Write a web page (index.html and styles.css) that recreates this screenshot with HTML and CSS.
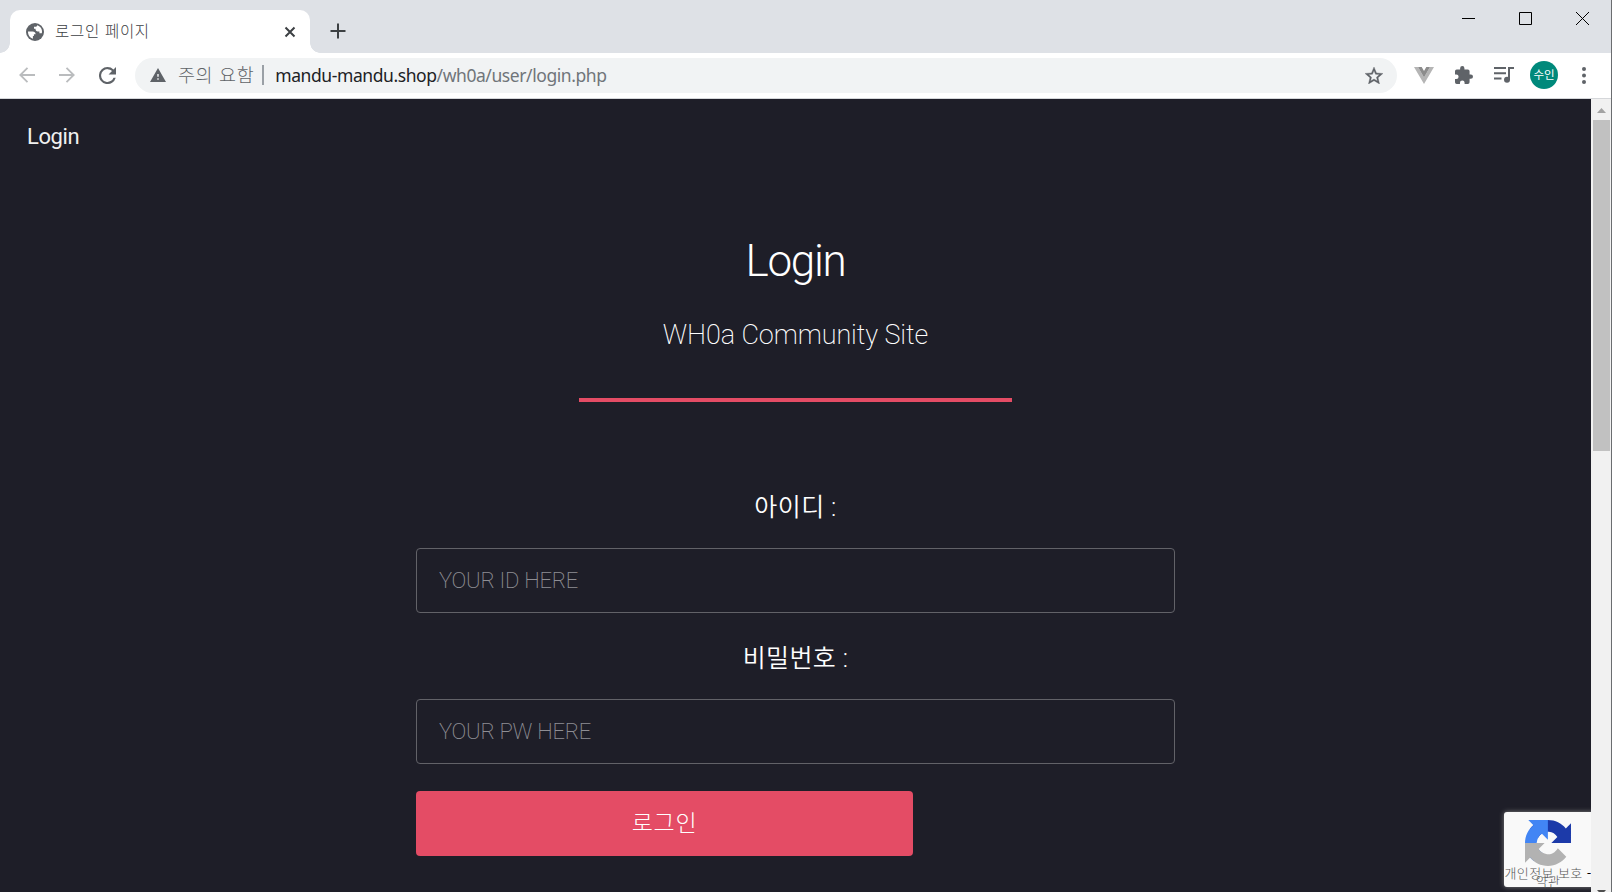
FILE: index.html
```html
<!DOCTYPE html>
<html lang="ko">
<head>
  <meta charset="UTF-8">
  <title>로그인 페이지</title>
  <link rel="stylesheet" href="styles.css">
</head>
<body>

<div class="window">
  <div class="tabstrip">
    <div class="tab">
      <svg class="globe" viewBox="0 0 18 18"><circle cx="9" cy="9" r="9" fill="#5f6368"/><path d="M2 8.500h4.600c1.900 0 3 .9 3 2.800H7.900v1.700h-1v2.700C4 14.900 2 12 2 9zM11.200 2.200c-.2 1-.9 1.500-2 1.500H8v2.100h1.500c0 2 .8 2.700 2.300 2.700h1.600v1.800h2.400C16.900 6.600 14.600 3.200 11.200 2.200z" fill="#fff"/></svg>
      <span class="tab-title">로그인 페이지</span>
      <svg class="tab-close" viewBox="0 0 12 12"><path d="M1.500 1.500l9 9M10.500 1.500l-9 9" stroke="#3c4043" stroke-width="2"/></svg>
    </div>
    <svg class="new-tab" viewBox="0 0 16 16"><path d="M8 .5v15M.5 8h15" stroke="#3c4043" stroke-width="2"/></svg>
    <div class="controls">
      <svg viewBox="0 0 13 13"><path d="M0 6.500h13" stroke="#000"/></svg>
      <svg viewBox="0 0 13 13"><path d="M.5.5h12v12H.5z" fill="none" stroke="#000"/></svg>
      <svg viewBox="0 0 13 13"><path d="M0 0l13 13M13 0L0 13" stroke="#000"/></svg>
    </div>
  </div>

  <div class="toolbar">
    <svg class="nav-icon off" viewBox="0 0 16 16"><path d="M16 8H1.500M8.500 .8L1.300 8l7.200 7.200" fill="none" stroke="currentColor" stroke-width="1.800"/></svg>
    <svg class="nav-icon off" viewBox="0 0 16 16"><path d="M0 8h14.500M7.500 .8L14.700 8l-7.200 7.200" fill="none" stroke="currentColor" stroke-width="1.800"/></svg>
    <svg class="nav-icon reload" viewBox="4 4 16 16"><path d="M17.650 6.350A7.960 7.960 0 0 0 12 4a8 8 0 1 0 7.730 10h-2.080A6 6 0 1 1 12 6c1.660 0 3.140.69 4.220 1.780L13 11h7V4z" fill="currentColor"/></svg>
    <div class="omnibox">
      <svg class="warn" viewBox="1 2 22 19"><path d="M1 21h22L12 2zm12-3h-2v-2h2zm0-4h-2v-4h2z" fill="#5f6368"/></svg>
      <span class="insecure">주의 요함</span>
      <span class="divider"></span>
      <span class="url">mandu-mandu.shop<i>/wh0a/user/login.php</i></span>
      <svg class="star" viewBox="2 2 20 19"><path d="M22 9.240l-7.190-.62L12 2 9.190 8.630 2 9.240l5.460 4.730L5.820 21 12 17.270 18.180 21l-1.630-7.030zM12 15.400l-3.760 2.270 1-4.280-3.320-2.880 4.380-.38L12 6.100l1.710 4.040 4.380.38-3.320 2.880 1 4.280z" fill="#5f6368" stroke="#5f6368" stroke-width=".4"/></svg>
    </div>
    <svg class="vue" viewBox="0 0 20 17"><path d="M0 0h4l6 10.400L16 0h4L10 17z" fill="#b5b5b5"/><path d="M4 0h3.700L10 4l2.300-4H16l-6 10.400z" fill="#8c8c8c"/></svg>
    <svg class="puzzle" viewBox="2 1 21 21"><path d="M20.500 11H19V7a2 2 0 0 0-2-2h-4V3.500a2.500 2.500 0 0 0-5 0V5H4a2 2 0 0 0-2 2v3.800h1.500a2.700 2.700 0 0 1 0 5.400H2V20a2 2 0 0 0 2 2h3.800v-1.500a2.700 2.700 0 0 1 5.400 0V22H17a2 2 0 0 0 2-2v-4h1.500a2.500 2.500 0 0 0 0-5z" fill="#5f6368"/></svg>
    <svg class="music" viewBox="0 0 20 16"><path d="M0 1h12M0 6.300h12M0 11.600h7.500M15 13V1h5" fill="none" stroke="#5f6368" stroke-width="2"/><circle cx="13" cy="12.800" r="3" fill="#5f6368"/></svg>
    <span class="avatar">수인</span>
    <svg class="dots" viewBox="0 0 4 17"><g fill="#5f6368"><circle cx="2" cy="2" r="2"/><circle cx="2" cy="8.500" r="2"/><circle cx="2" cy="15" r="2"/></g></svg>
  </div>

  <div class="viewport">
    <div class="page">
      <nav><a>Login</a></nav>
      <header>
        <h1>Login</h1>
        <p>WH0a Community Site</p>
      </header>
      <form>
        <label for="id">아이디 :</label>
        <input id="id" type="text" placeholder="YOUR ID HERE">
        <label for="pw">비밀번호 :</label>
        <input id="pw" type="password" placeholder="YOUR PW HERE">
        <button type="button">로그인</button>
      </form>

      <div class="captcha">
        <svg viewBox="0 0 64 64"><path d="M64 31.955l-.033-1.370V4.687l-7.160 7.160C50.948 4.674 42.033.093 32.050.093c-10.400 0-19.622 4.960-25.458 12.640l11.736 11.860a15.550 15.550 0 0 1 4.754-5.334c2.050-1.600 4.952-2.906 8.968-2.906.485 0 .86.057 1.135.163 4.976.393 9.288 3.140 11.828 7.124l-8.307 8.307L64 31.953" fill="#1c3aa9"/><path d="M31.862.094l-1.370.033H4.594l7.160 7.160C4.580 13.147 0 22.060 0 32.046c0 10.400 4.960 19.622 12.640 25.458L24.500 45.768a15.550 15.550 0 0 1-5.334-4.754c-1.600-2.050-2.906-4.952-2.906-8.968 0-.485.057-.86.163-1.135.393-4.976 3.140-9.288 7.124-11.828l8.307 8.307L31.860.095" fill="#4285f4"/><path d="M.001 32.045l.033 1.370v25.898l7.160-7.160c5.860 7.173 14.774 11.754 24.760 11.754 10.400 0 19.622-4.960 25.458-12.640l-11.736-11.860a15.550 15.550 0 0 1-4.754 5.334c-2.050 1.600-4.952 2.906-8.968 2.906-.485 0-.86-.057-1.135-.163-4.976-.393-9.288-3.140-11.828-7.124l8.307-8.307c-10.522.04-22.400.066-27.295-.005" fill="#b2b2b2"/></svg>
        <div class="terms">개인정보 보호 <b>-</b><br><span>약관</span></div>
      </div>
    </div>
    <div class="scrollbar">
      <svg viewBox="0 0 9 5"><path d="M0 5L4.500 0 9 5z" fill="#a3a3a3"/></svg>
      <div class="thumb"></div>
      <svg class="down" viewBox="0 0 9 5"><path d="M0 0h9L4.500 5z" fill="#505050"/></svg>
    </div>
  </div>
</div>

</body>
</html>
```
FILE: styles.css
```css
* { box-sizing: border-box; }
body { margin: 0; overflow: hidden; font-family: Roboto, "Noto Sans CJK KR", sans-serif; }
svg { display: block; flex: none; }

.window {
  width: 1612px;
  height: 892px;
  display: flex;
  flex-direction: column;
  border-right: 1px solid #6b6d70;
}

/* browser chrome */
.tabstrip {
  height: 53px;
  display: flex;
  background: #dee1e6;
  padding: 10px 0 0 10px;
}
.tab {
  position: relative;
  width: 300px;
  height: 43px;
  display: flex;
  align-items: center;
  padding: 0 14px 0 16px;
  background: #fff;
  border-radius: 10px 10px 0 0;
}
.tab:before, .tab:after {
  content: "";
  position: absolute;
  bottom: 0;
  width: 10px;
  height: 10px;
}
.tab:before { left: -10px; background: radial-gradient(circle at 0 0, #dee1e6 9.5px, #fff 10px); }
.tab:after { right: -10px; background: radial-gradient(circle at 100% 0, #dee1e6 9.5px, #fff 10px); }
.globe { width: 18px; height: 18px; }
.tab-title {
  flex: 1;
  margin-left: 11px;
  padding-bottom: 3px;
  font: 300 15.5px/20px "Noto Sans CJK KR", sans-serif;
  letter-spacing: 0.7px;
  color: #3c4043;
}
.tab-close { width: 12px; height: 12px; }
.new-tab { width: 16px; height: 16px; margin: 13px 0 0 20px; }
.controls { display: flex; gap: 44px; margin: 2px 22px 0 auto; }
.controls svg { width: 13px; height: 13px; }

.toolbar {
  height: 46px;
  display: flex;
  align-items: center;
  padding: 0 25px 1px 19px;
  border-bottom: 1px solid #d5d7da;
  background: #fff;
}
.nav-icon { width: 16px; height: 16px; margin-right: 24px; color: #5f6368; }
.off { color: #babcbe; }
.reload { width: 17px; height: 17px; margin-right: 19px; }
.omnibox {
  width: 1262px;
  height: 35px;
  display: flex;
  align-items: center;
  padding: 0 14px 0 15px;
  border-radius: 18px;
  background: #f1f3f4;
}
.warn { width: 16px; height: 14px; }
.insecure {
  margin-left: 12px;
  padding-bottom: 2px;
  font: 300 18.5px/24px "Noto Sans CJK KR", sans-serif;
  letter-spacing: 0.6px;
  color: #5f6368;
}
.divider { width: 2px; height: 20px; margin: 0 11px 0 8px; background: #9aa0a6; }
.url {
  flex: 1;
  font: 17.5px/24px "Noto Sans", sans-serif;
  letter-spacing: -0.42px;
  color: #202124;
}
.url i { font-style: normal; color: #70757a; }
.star { width: 18px; height: 17px; }
.vue { width: 20px; height: 17px; margin-left: 17px; }
.puzzle { width: 18px; height: 18px; margin-left: 21px; }
.music { width: 20px; height: 16px; margin-left: 21px; }
.avatar {
  width: 28px;
  height: 28px;
  margin-left: 16px;
  border-radius: 50%;
  background: #00897b;
  color: #fff;
  font: 11.5px/27px "Noto Sans CJK KR", sans-serif;
  text-align: center;
}
.dots { width: 4px; height: 17px; margin-left: auto; }

/* page */
.viewport { flex: 1; display: flex; min-height: 0; }
.page {
  position: relative;
  flex: 1;
  overflow: hidden;
  background: #1e1e28;
  color: #fff;
}
nav {
  padding: 24px 27px 0;
  font-size: 22px;
  line-height: 28px;
  letter-spacing: -0.4px;
  color: #f0f0f0;
}
header {
  width: 433px;
  height: 187px;
  margin: 64px auto 0;
  padding-top: 18px;
  border-bottom: 4px solid #e44c65;
  text-align: center;
}
h1 {
  margin: 0;
  font-weight: 300;
  font-size: 44px;
  line-height: 56px;
  letter-spacing: -0.03em;
}
p { margin: 28px 0 0; font-weight: 200; font-size: 27px; line-height: 36px; letter-spacing: -0.1px; }
form { width: 759px; margin: 0 auto; padding-top: 72px; }
label {
  display: block;
  height: 74px;
  padding-top: 16px;
  font-size: 25px;
  line-height: 36px;
  font-weight: 350;
  letter-spacing: 0.4px;
  text-align: center;
}
input {
  display: block;
  width: 100%;
  height: 65px;
  margin-bottom: 12px;
  padding: 0 22px;
  border: 1px solid #626268;
  border-radius: 4px;
  background: none;
  font: 200 22px Roboto, sans-serif;
  letter-spacing: -0.25px;
}
input::placeholder { color: #8e8e94; opacity: 1; }
button {
  display: block;
  width: 497px;
  height: 65px;
  margin-top: 27px;
  padding: 0 0 6px;
  border: 0;
  border-radius: 4px;
  background: #e44c65;
  color: #fff;
  font: 300 23px "Noto Sans CJK KR", sans-serif;
  letter-spacing: 0.7px;
}

.captcha {
  position: absolute;
  left: 1504px;
  top: 713px;
  width: 256px;
  height: 75px;
  padding-top: 8px;
  border-radius: 3px;
  background: #f9f9f9;
  box-shadow: 0 0 5px #808080;
}
.captcha svg { width: 46px; height: 46px; margin-left: 21px; }
.terms {
  width: 88px;
  margin-top: 3px;
  font: 300 13px/8px "Noto Sans CJK KR", sans-serif;
  letter-spacing: 0.4px;
  text-align: center;
  color: #555;
  white-space: nowrap;
}
.terms b { color: #000; }

.scrollbar {
  width: 20px;
  background: #f1f1f1;
  display: flex;
  flex-direction: column;
  align-items: center;
}
.scrollbar svg { width: 9px; height: 5px; margin-top: 9px; }
.thumb { width: 17px; height: 331px; margin-top: 7px; background: #c1c1c1; }
.scrollbar .down { margin: auto 0 -3px; }
```
